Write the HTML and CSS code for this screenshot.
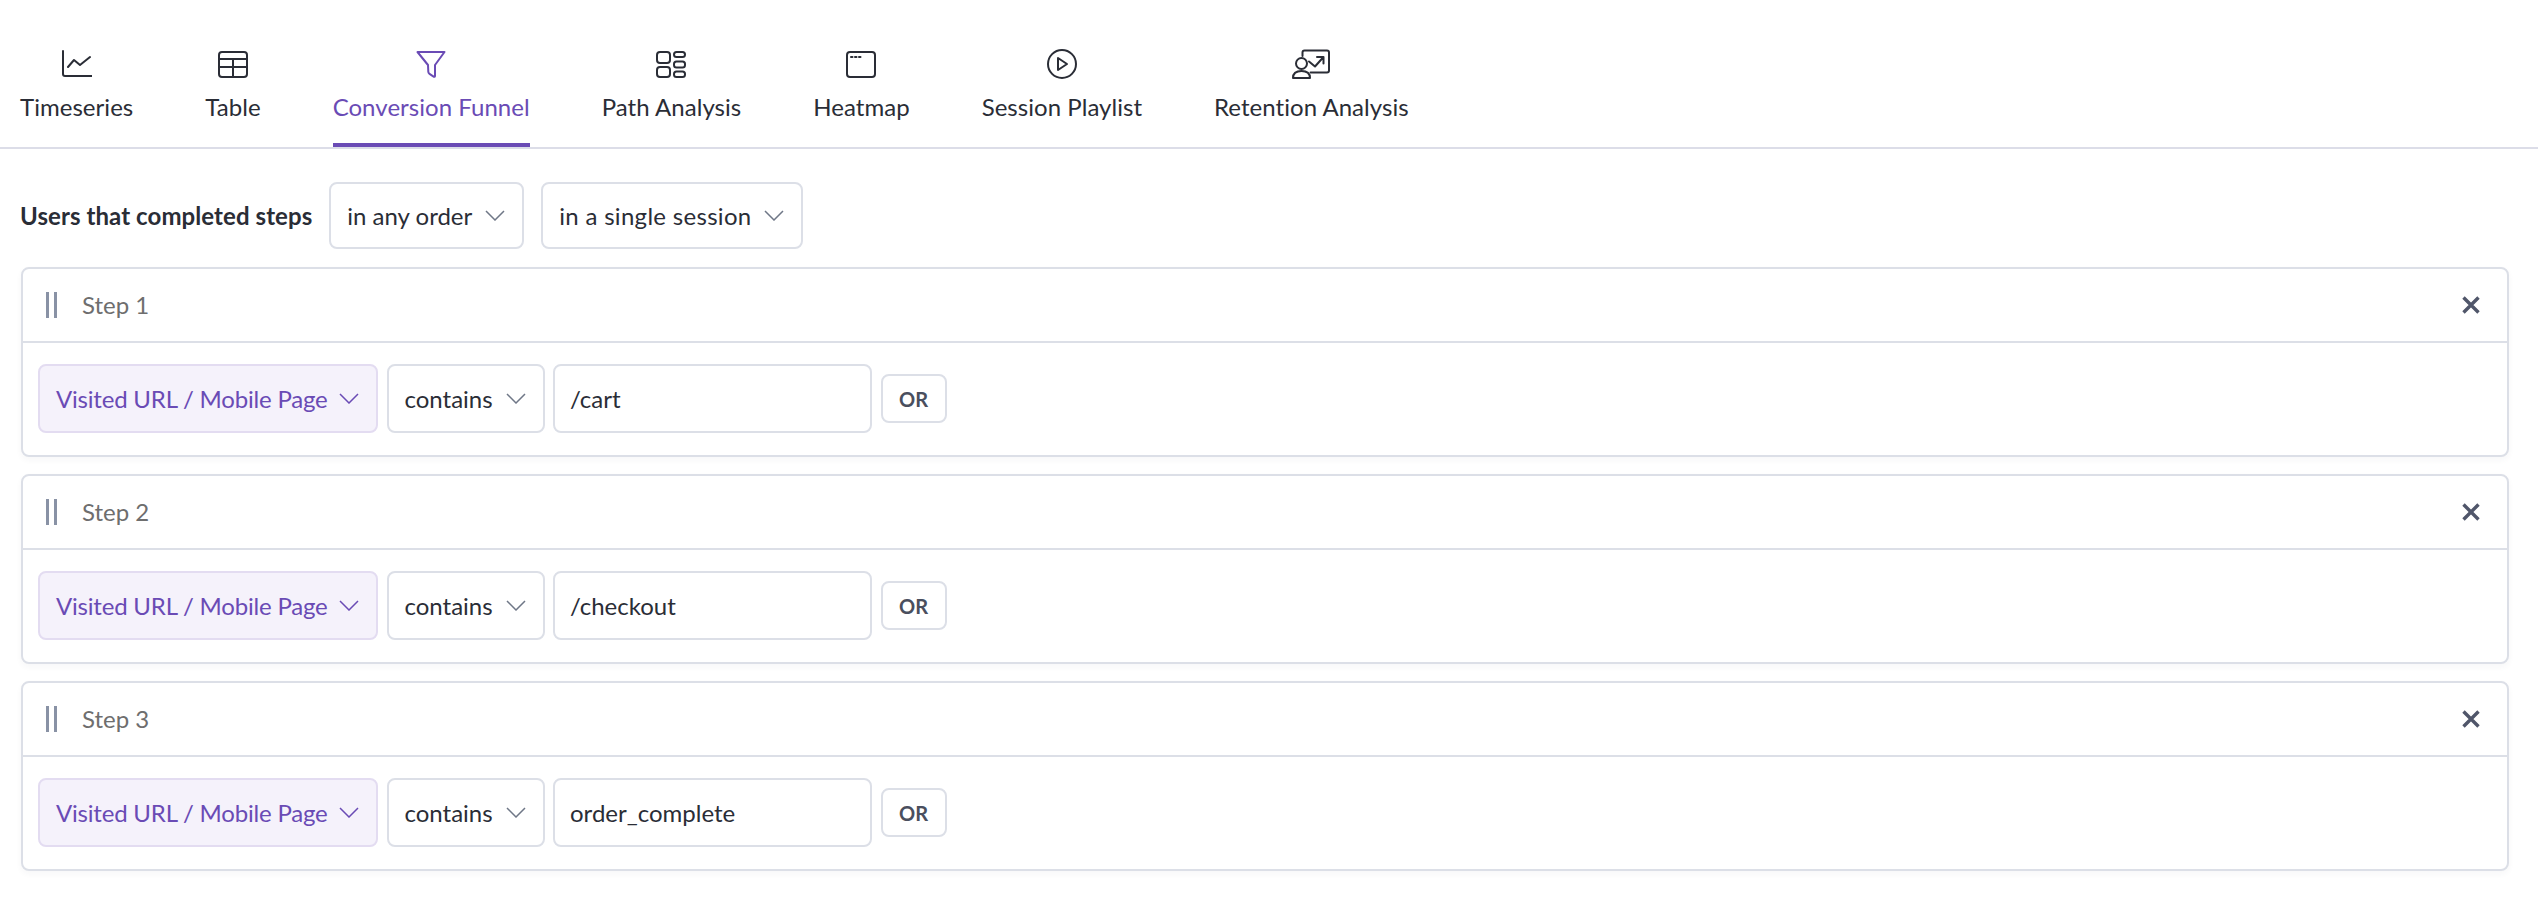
FILE: index.html
```html
<!DOCTYPE html>
<html lang="en">
<head>
<meta charset="utf-8">
<title>Conversion Funnel</title>
<link rel="stylesheet" href="styles.css">
</head>
<body>
<nav class="tabs">
  <div class="tab">
    <svg class="icon" width="30" height="30" viewBox="0 0 30 30"><path d="M1 2v23q0 2 2 2h27M6 18l6-7 6 5 10-8"/></svg>
    <span class="tab-label">Timeseries</span>
  </div>
  <div class="tab">
    <svg class="icon" width="30" height="30" viewBox="0 0 30 30"><rect x="1" y="3" width="28" height="25" rx="3"/><path d="M1 10h28M1 18h28M15 10v18"/></svg>
    <span class="tab-label">Table</span>
  </div>
  <div class="tab tab-active">
    <svg class="icon" width="30" height="30" viewBox="0 0 30 30"><path d="M1.500 3h27L19 16v11q0 1-1 .8l-4.500-3q-1-.6-1.200-2L12 16z"/></svg>
    <span class="tab-label">Conversion Funnel</span>
  </div>
  <div class="tab">
    <svg class="icon" width="30" height="30" viewBox="0 0 30 30"><rect x="1" y="3" width="13" height="11" rx="3"/><rect x="1" y="18" width="13" height="10" rx="3"/><rect x="18" y="3" width="11" height="5" rx="2.500"/><rect x="18" y="12.500" width="11" height="6" rx="2.500"/><rect x="18" y="22.500" width="11" height="5.500" rx="2.500"/></svg>
    <span class="tab-label">Path Analysis</span>
  </div>
  <div class="tab">
    <svg class="icon" width="30" height="30" viewBox="0 0 30 30"><rect x="1" y="3" width="28" height="25" rx="3"/><path class="dots" d="M5 8h1.500M9 8h1.500M13 8h1.500"/></svg>
    <span class="tab-label">Heatmap</span>
  </div>
  <div class="tab">
    <svg class="icon" width="30" height="30" viewBox="0 0 30 30"><circle cx="15" cy="15" r="14"/><path d="M11 9l9 6-9 6z"/></svg>
    <span class="tab-label">Session Playlist</span>
  </div>
  <div class="tab">
    <svg class="icon" width="38" height="30" viewBox="0 0 38 30"><path d="M10.500 7V3.500q0-2 2-2h22.500q2 0 2 2v18q0 2-2 2H18.500M17 12.500l6 5 8.500-9.500M25 8h6.500v6.500"/><circle cx="9.500" cy="14.500" r="5.500"/><path d="M1 29q0-7 8.500-7t8.500 7z"/></svg>
    <span class="tab-label">Retention Analysis</span>
  </div>
</nav>

<main class="content">
  <div class="filter-row">
    <span class="filter-label">Users that completed steps</span>
    <div class="select select-order">in any order<svg class="chev" width="20" height="11" viewBox="0 0 20 11"><path d="M1 1l9 9 9-9"/></svg></div>
    <div class="select select-session">in a single session<svg class="chev" width="20" height="11" viewBox="0 0 20 11"><path d="M1 1l9 9 9-9"/></svg></div>
  </div>

  <section class="card">
    <header class="card-head">
      <span class="handle"></span>
      <span class="step-name">Step 1</span>
      <svg class="close" width="18" height="18" viewBox="0 0 18 18"><path d="M1.500 1.500l15 15M16.500 1.500l-15 15"/></svg>
    </header>
    <div class="card-body">
      <div class="select select-event">Visited URL / Mobile Page<svg class="chev" width="20" height="11" viewBox="0 0 20 11"><path d="M1 1l9 9 9-9"/></svg></div>
      <div class="select select-op">contains<svg class="chev" width="20" height="11" viewBox="0 0 20 11"><path d="M1 1l9 9 9-9"/></svg></div>
      <div class="value">/cart</div>
      <div class="or">OR</div>
    </div>
  </section>

  <section class="card">
    <header class="card-head">
      <span class="handle"></span>
      <span class="step-name">Step 2</span>
      <svg class="close" width="18" height="18" viewBox="0 0 18 18"><path d="M1.500 1.500l15 15M16.500 1.500l-15 15"/></svg>
    </header>
    <div class="card-body">
      <div class="select select-event">Visited URL / Mobile Page<svg class="chev" width="20" height="11" viewBox="0 0 20 11"><path d="M1 1l9 9 9-9"/></svg></div>
      <div class="select select-op">contains<svg class="chev" width="20" height="11" viewBox="0 0 20 11"><path d="M1 1l9 9 9-9"/></svg></div>
      <div class="value">/checkout</div>
      <div class="or">OR</div>
    </div>
  </section>

  <section class="card">
    <header class="card-head">
      <span class="handle"></span>
      <span class="step-name">Step 3</span>
      <svg class="close" width="18" height="18" viewBox="0 0 18 18"><path d="M1.500 1.500l15 15M16.500 1.500l-15 15"/></svg>
    </header>
    <div class="card-body">
      <div class="select select-event">Visited URL / Mobile Page<svg class="chev" width="20" height="11" viewBox="0 0 20 11"><path d="M1 1l9 9 9-9"/></svg></div>
      <div class="select select-op">contains<svg class="chev" width="20" height="11" viewBox="0 0 20 11"><path d="M1 1l9 9 9-9"/></svg></div>
      <div class="value">order_complete</div>
      <div class="or">OR</div>
    </div>
  </section>
</main>
</body>
</html>
```
FILE: styles.css
```css
* { box-sizing: border-box; }
html, body { margin: 0; background: #fff; }
body {
  font-family: "Lato", "Liberation Sans", sans-serif;
  font-size: 24px;
  color: #2a2d36;
  overflow: hidden;
}
.tabs {
  display: flex;
  gap: 72px;
  height: 149px;
  padding-left: 20px;
  border-bottom: 2px solid #dcdde8;
}
.tab {
  display: flex;
  flex-direction: column;
  align-items: center;
  height: 147px;
  padding-top: 49px;
  border-bottom: 4px solid transparent;
}
.icon { fill: none; stroke: currentColor; stroke-width: 2; stroke-linecap: round; stroke-linejoin: round; }
.tab-label { margin-top: 13px; line-height: 30px; white-space: nowrap; letter-spacing: 0.04px; }
.tab-active { color: #6a4bb5; border-bottom-color: #6a4bb5; }
.content { padding: 33px 29px 0 20px; }
.filter-row { display: flex; align-items: center; gap: 17px; height: 67px; margin-bottom: 18px; }
.filter-label { font-weight: 700; white-space: nowrap; letter-spacing: 0.08px; }
.select {
  display: flex;
  align-items: center;
  justify-content: space-between;
  height: 69px;
  border: 2px solid #dcdfe7;
  border-radius: 8px;
  padding: 0 17px 0 16px;
  background: #fff;
  white-space: nowrap;
}
.select-order { width: 195px; height: 67px; }
.select-session { width: 262px; height: 67px; letter-spacing: 0.3px; }
.chev { flex: none; fill: none; stroke: #6f7787; stroke-width: 1.5; }
.card {
  height: 190px;
  margin: 0 0 17px 1px;
  border: 2px solid #dcdfe7;
  border-radius: 8px;
  background: #fff;
  box-shadow: 0 3px 6px rgba(40, 45, 70, 0.04);
}
.card-head {
  display: flex;
  align-items: center;
  height: 74px;
  padding: 0 27px 0 23px;
  border-bottom: 2px solid #dcdfe7;
}
.handle {
  flex: none;
  width: 11px;
  height: 26px;
  border-left: 3px solid #8992a5;
  border-right: 3px solid #8992a5;
}
.step-name { margin: 0 0 2px 25px; color: #6e6e6e; }
.close { margin-left: auto; fill: none; stroke: #50566a; stroke-width: 3.4; }
.card-body { display: flex; align-items: center; gap: 8.500px; padding: 21px 15px 0; }
.select-event {
  width: 340px;
  color: #6a4bb5;
  background: #f5f2fb;
  border-color: #e3dcf1;
  letter-spacing: -0.2px;
}
.select-event .chev { stroke: #6a4bb5; }
.select-op { width: 158px; }
.value {
  display: flex;
  align-items: center;
  width: 319px;
  height: 69px;
  padding-left: 15px;
  border: 2px solid #dcdfe7;
  border-radius: 8px;
}
.or {
  display: flex;
  align-items: center;
  justify-content: center;
  width: 66px;
  height: 49px;
  border: 2px solid #dcdfe7;
  border-radius: 8px;
  font-size: 20px;
  font-weight: 700;
  color: #4a4f5e;
}
```
